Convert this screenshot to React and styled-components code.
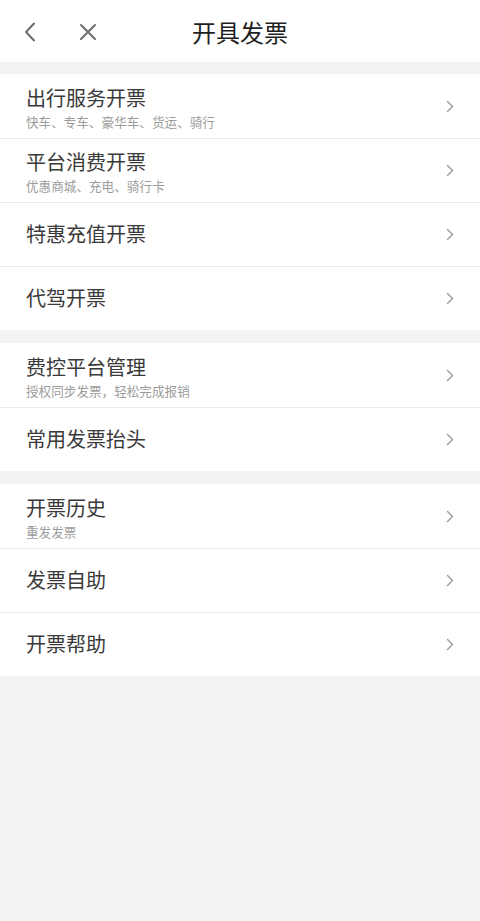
import React from "react";
import styled, { createGlobalStyle } from "styled-components";

const Global = createGlobalStyle`
  html, body { margin: 0; padding: 0; background: #f3f3f5; }
  body { font-family: "Noto Sans CJK SC", "Noto Sans", sans-serif; }
  #root { min-height: 921px; background: #f3f3f5; }
`;

const Page = styled.div`
  width: 480px;
  min-height: 921px;
  background: #f3f3f5;
  display: flex;
  flex-direction: column;
`;

const Header = styled.header`
  height: 61px;
  padding-top: 1px;
  box-sizing: border-box;
  height: 62px;
  background: #fff;
  display: grid;
  grid-template-columns: 1fr auto 1fr;
  align-items: center;
`;

const HeaderLeft = styled.div`
  display: flex;
  align-items: center;
  padding-left: 20px;
`;

const IconButton = styled.button`
  border: 0;
  background: none;
  padding: 0;
  width: ${(p) => p.$w || 20}px;
  height: 22px;
  display: flex;
  align-items: center;
  justify-content: center;
  margin-right: ${(p) => p.$mr || 0}px;
`;

const Title = styled.h1`
  margin: 0;
  font-size: 24px;
  font-weight: 400;
  color: #1f1f1f;
  line-height: 1;
`;

const Group = styled.section`
  margin-top: ${(p) => (p.$first ? 12 : 13)}px;
  background: #fff;
  display: flex;
  flex-direction: column;
`;

const Row = styled.div`
  height: 64px;
  box-sizing: border-box;
  display: flex;
  align-items: center;
  padding: 0 26px;
  & + & {
    border-top: 1px solid #ebebed;
  }
`;

const Texts = styled.div`
  flex: 1;
  display: flex;
  flex-direction: column;
  gap: 4px;
  padding-top: ${(p) => (p.$sub ? 3 : 0)}px;
`;

const RowTitle = styled.div`
  font-size: 20px;
  color: #3a3a3a;
  line-height: 24px;
  margin-top: ${(p) => (p.$sub ? 0 : -1)}px;
`;

const RowSub = styled.div`
  font-size: 12.6px;
  color: #9c9c9c;
  line-height: 16px;
`;

const Chevron = styled.svg`
  width: 8px;
  height: 13px;
  flex: none;
`;

const groups = [
  [
    { t: "出行服务开票", s: "快车、专车、豪华车、货运、骑行" },
    { t: "平台消费开票", s: "优惠商城、充电、骑行卡" },
    { t: "特惠充值开票" },
    { t: "代驾开票" },
  ],
  [
    { t: "费控平台管理", s: "授权同步发票，轻松完成报销" },
    { t: "常用发票抬头" },
  ],
  [
    { t: "开票历史", s: "重发发票" },
    { t: "发票自助" },
    { t: "开票帮助" },
  ],
];

export default function App() {
  return (
    <Page>
      <Global />
      <Header>
        <HeaderLeft>
          <IconButton $w={20} $mr={38} aria-label="back">
            <svg width="14" height="20" viewBox="0 0 14 20">
              <path d="M11 1.5 L3 10 L11 18.5" fill="none" stroke="#6b6d73" strokeWidth="2" strokeLinecap="round" strokeLinejoin="round" />
            </svg>
          </IconButton>
          <IconButton $w={20} aria-label="close">
            <svg width="18" height="18" viewBox="0 0 18 18">
              <path d="M2 2 L16 16 M16 2 L2 16" fill="none" stroke="#6b6d73" strokeWidth="2" strokeLinecap="round" />
            </svg>
          </IconButton>
        </HeaderLeft>
        <Title>开具发票</Title>
        <div />
      </Header>
      {groups.map((g, gi) => (
        <Group key={gi} $first={gi === 0}>
          {g.map((r) => (
            <Row key={r.t}>
              <Texts $sub={!!r.s}>
                <RowTitle $sub={!!r.s}>{r.t}</RowTitle>
                {r.s && <RowSub>{r.s}</RowSub>}
              </Texts>
              <Chevron viewBox="0 0 8 13">
                <path d="M1.5 1.5 L6.5 6.5 L1.5 11.5" fill="none" stroke="#999" strokeWidth="1.4" strokeLinecap="round" strokeLinejoin="round" />
              </Chevron>
            </Row>
          ))}
        </Group>
      ))}
    </Page>
  );
}
